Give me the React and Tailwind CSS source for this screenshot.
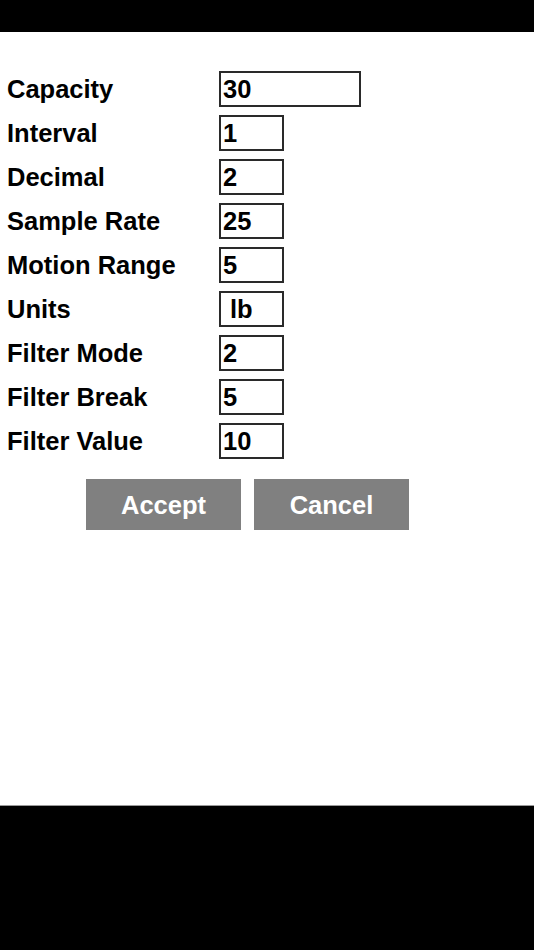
import React from "react";

const fields = [
  { label: "Capacity", value: "30", wide: true },
  { label: "Interval", value: "1" },
  { label: "Decimal", value: "2" },
  { label: "Sample Rate", value: "25" },
  { label: "Motion Range", value: "5" },
  { label: "Units", value: "lb", indent: true },
  { label: "Filter Mode", value: "2" },
  { label: "Filter Break", value: "5" },
  { label: "Filter Value", value: "10" },
];

const App = () => {
  return (
    <div className="h-[950px] w-[534px] flex flex-col bg-black font-['Liberation_Sans',Arial,sans-serif] font-bold text-black">
      <div className="h-[32px] bg-black"></div>

      <main className="h-[774px] bg-white pt-[39px] border-b border-[#9a9a9a]">
        <div className="flex flex-col gap-[8px]">
          {fields.map((f) => (
            <div key={f.label} className="flex items-center h-[36px]">
              <div className="w-[219px] pl-[7px] pt-[2px] text-[25.5px] leading-none">{f.label}</div>
              <div
                className={`${f.wide ? "w-[142px]" : "w-[65px]"} ${f.indent ? "pl-[9px]" : "pl-[2px]"} pt-[2px] h-[36px] border-[2px] border-[#2a2a2a] flex items-center text-[25.5px] leading-none`}
              >
                {f.value}
              </div>
            </div>
          ))}
        </div>

        <div className="flex gap-[13px] pl-[86px] mt-[20px]">
          <button className="w-[155px] h-[51px] pt-[2px] bg-[#808080] text-white text-[25.5px] font-bold">Accept</button>
          <button className="w-[155px] h-[51px] pt-[2px] bg-[#808080] text-white text-[25.5px] font-bold">Cancel</button>
        </div>
      </main>

      <div className="flex-1 bg-black"></div>
    </div>
  );
};

export default App;
